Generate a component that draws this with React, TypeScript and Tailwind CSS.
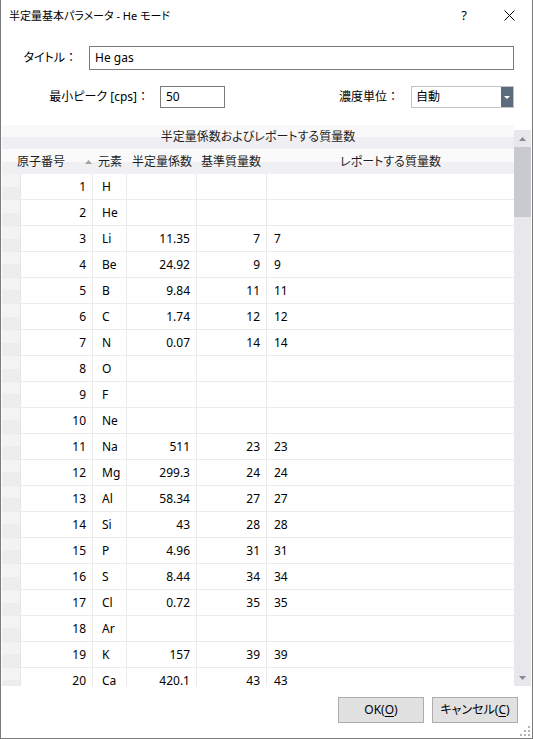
import React from 'react';

type Row = { z: number; el: string; coef?: string; base?: string; report?: string };

const rows: Row[] = [
  { z: 1, el: 'H' },
  { z: 2, el: 'He' },
  { z: 3, el: 'Li', coef: '11.35', base: '7', report: '7' },
  { z: 4, el: 'Be', coef: '24.92', base: '9', report: '9' },
  { z: 5, el: 'B', coef: '9.84', base: '11', report: '11' },
  { z: 6, el: 'C', coef: '1.74', base: '12', report: '12' },
  { z: 7, el: 'N', coef: '0.07', base: '14', report: '14' },
  { z: 8, el: 'O' },
  { z: 9, el: 'F' },
  { z: 10, el: 'Ne' },
  { z: 11, el: 'Na', coef: '511', base: '23', report: '23' },
  { z: 12, el: 'Mg', coef: '299.3', base: '24', report: '24' },
  { z: 13, el: 'Al', coef: '58.34', base: '27', report: '27' },
  { z: 14, el: 'Si', coef: '43', base: '28', report: '28' },
  { z: 15, el: 'P', coef: '4.96', base: '31', report: '31' },
  { z: 16, el: 'S', coef: '8.44', base: '34', report: '34' },
  { z: 17, el: 'Cl', coef: '0.72', base: '35', report: '35' },
  { z: 18, el: 'Ar' },
  { z: 19, el: 'K', coef: '157', base: '39', report: '39' },
  { z: 20, el: 'Ca', coef: '420.1', base: '43', report: '43' },
];

const ResizeGrip: React.FC = () => (
  <svg width="10" height="10" viewBox="0 0 10 10" className="absolute right-[2px] bottom-[2px]">
    {[
      [8, 0], [8, 4], [4, 4], [8, 8], [4, 8], [0, 8],
    ].map(([x, y], i) => (
      <rect key={i} x={x} y={y} width="2" height="2" fill="#b4b4b4" />
    ))}
  </svg>
);

// full-width colon keeps its own box, like the Windows UI font
const Colon = () => <span className="[font-feature-settings:normal]">：</span>;

export default function App() {
  return (
    <div className="relative w-[533px] h-[739px] bg-white border-l border-r border-b border-[#7a7a7a] flex flex-col text-[12px] text-black font-['Noto_Sans','Noto_Sans_CJK_JP',sans-serif] [font-feature-settings:'palt'] overflow-hidden">
      {/* Title bar */}
      <div className="h-[31px] shrink-0 flex items-center pl-[8px]">
        <span className="leading-none text-[11px]">半定量基本パラメータ - He モード</span>
        <span className="ml-auto text-[13px] leading-none mr-[37px]">?</span>
        <svg width="11" height="11" viewBox="0 0 11 11" className="mr-[17px]">
          <path d="M0.5 0.5 L10.5 10.5 M10.5 0.5 L0.5 10.5" stroke="#000" strokeWidth="1" />
        </svg>
      </div>

      {/* Title row */}
      <div className="mt-[15px] h-[24px] flex items-center">
        <div className="w-[88px] text-right pr-[12px] leading-none">タイトル<Colon /></div>
        <div className="w-[425px] h-full border border-[#7a7a7a] flex items-center pl-[5px]">He gas</div>
      </div>

      {/* Min peak / unit row */}
      <div className="mt-[16px] h-[22px] flex items-center">
        <div className="w-[159px] text-right pr-[11px] leading-none">最小ピーク [cps]<Colon /></div>
        <div className="w-[65px] h-full border border-[#7a7a7a] flex items-center pl-[5px]">50</div>
        <div className="flex-1 text-right pr-[12px] leading-none">濃度単位<Colon /></div>
        <div className="w-[103px] h-full border border-[#c3c3c3] flex items-center mr-[18px]">
          <span className="flex-1 pl-[4px]">自動</span>
          <div className="w-[12px] h-full bg-[#5d6b7e] flex items-center justify-center">
            <svg width="6" height="3" viewBox="0 0 6 3">
              <path d="M0 0 H6 L3 3 Z" fill="#ffffff" />
            </svg>
          </div>
        </div>
      </div>

      {/* Grid */}
      <div className="mt-[17px] h-[561px] flex ml-[1px]">
        <div className="w-[512px] flex flex-col overflow-hidden">
          <div className="h-[24px] shrink-0 flex items-center justify-center bg-[linear-gradient(#f9f9fa_50%,#efeff3_50%)] text-[#1e1e1e]">
            半定量係数およびレポートする質量数
          </div>
          <div className="h-[25px] shrink-0 flex items-center bg-[linear-gradient(#fafafa_50%,#f0f0f3_50%)] text-[#1e1e1e]">
            <div className="w-[91px] pl-[15px] flex items-center">
              <span className="w-[48px]">原子番号</span>
              <svg width="7" height="4" viewBox="0 0 7 4" className="ml-[20px]">
                <path d="M0 4 L3.5 0 L7 4 Z" fill="#a3a3a3" />
              </svg>
            </div>
            <div className="w-[34px] pl-[5px]">元素</div>
            <div className="w-[70px] pl-[5px]">半定量係数</div>
            <div className="w-[70px] pl-[4px]">基準質量数</div>
            <div className="flex-1 text-center">レポートする質量数</div>
          </div>
          <div className="flex-1 overflow-hidden">
            {rows.map((r) => (
              <div key={r.z} className="h-[26px] flex border-b border-[#ebebeb]">
                <div className="w-[19px] bg-[linear-gradient(#f3f3f3_50%,#ededed_50%)] border-r border-[#e6e6e6]" />
                <div className="w-[72px] border-r border-[#ebebeb] flex items-center justify-end pr-[6px]">{r.z}</div>
                <div className="w-[34px] border-r border-[#ebebeb] flex items-center pl-[9px]">{r.el}</div>
                <div className="w-[70px] border-r border-[#ebebeb] flex items-center justify-end pr-[6px]">{r.coef}</div>
                <div className="w-[70px] border-r border-[#ebebeb] flex items-center justify-end pr-[6px]">{r.base}</div>
                <div className="flex-1 flex items-center pl-[7px]">{r.report}</div>
              </div>
            ))}
          </div>
        </div>

        {/* Scrollbar */}
        <div className="w-[17px] mt-[5px] flex flex-col bg-[#e8e8ec]">
          <div className="h-[17px] shrink-0 flex items-center justify-center">
            <svg width="7" height="4" viewBox="0 0 7 4">
              <path d="M0 4 L3.5 0 L7 4 Z" fill="#868999" />
            </svg>
          </div>
          <div className="h-[70px] shrink-0 bg-[#c9cad1]" />
          <div className="flex-1" />
          <div className="h-[17px] shrink-0 flex items-center justify-center">
            <svg width="7" height="4" viewBox="0 0 7 4">
              <path d="M0 0 L7 0 L3.5 4 Z" fill="#868999" />
            </svg>
          </div>
        </div>
      </div>

      {/* Buttons */}
      <div className="mt-[11px] h-[26px] flex justify-end gap-[8px] mr-[14px]">
        <button className="w-[86px] h-full bg-[#e1e1e1] border border-[#adadad] flex items-center justify-center">
          OK(<span className="underline underline-offset-2">O</span>)
        </button>
        <button className="w-[86px] h-full bg-[#e1e1e1] border border-[#adadad] flex items-center justify-center">
          キャンセル(<span className="underline underline-offset-2">C</span>)
        </button>
      </div>

      <ResizeGrip />
    </div>
  );
}
